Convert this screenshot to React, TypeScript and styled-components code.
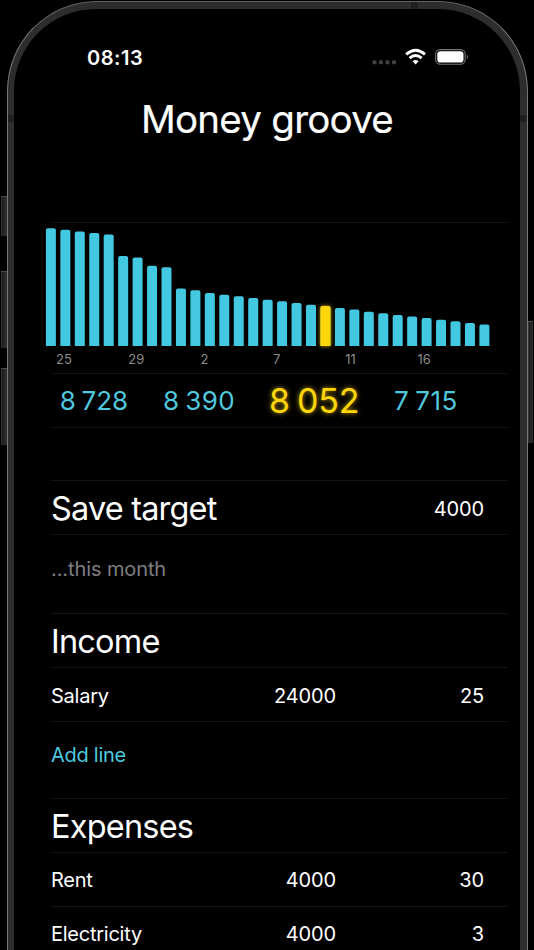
import React from 'react';
import styled, { createGlobalStyle, css } from 'styled-components';

const CYAN = '#42c8e0';
const CYAN_TEXT = '#50c8de';
const YELLOW = '#ffd60a';

const GlobalStyle = createGlobalStyle`
  html, body { margin: 0; background: #000; overflow: hidden; }
  * { box-sizing: border-box; }
`;

const Stage = styled.div`
  position: relative;
  height: 950px;
  padding: 1px 6px 0 7px;
  overflow: hidden;
  background: #000;
  color: #fff;
  font-family: Inter, sans-serif;
`;

const Phone = styled.div`
  position: relative;
  height: 1100px;
  padding: 7px 7px 7px 6px;
  border: 1px solid #777;
  border-top-color: #606060;
  border-radius: 90px;
  background: #2d2d2d;
`;

const Screen = styled.main`
  height: 100%;
  border-radius: 82px;
  background: #000;
  padding: 0 12px 0 37px;
`;

const SideButton = styled.div<{ $side: 'left' | 'right'; $top: number; $height: number }>`
  position: absolute;
  top: ${(p) => p.$top}px;
  height: ${(p) => p.$height}px;
  width: ${(p) => (p.$side === 'left' ? 6 : 5)}px;
  ${(p) => (p.$side === 'left' ? 'left: 1px;' : 'left: 528px;')}
  background: linear-gradient(90deg, #333 0 1px, #202020 1px 3px, #2c2c2c 3px);
  border-top: 1px solid #4c4c4c;
`;

const Antenna = styled.div<{ $edge: 'left' | 'right' | 'top' }>`
  position: absolute;
  width: 7px;
  height: 7px;
  background: #202020;
  ${(p) => p.$edge === 'left' && css`left: 0; top: 113px; width: 6px;`}
  ${(p) => p.$edge === 'right' && css`right: 0; top: 113px;`}
  ${(p) => p.$edge === 'top' && css`left: 403px; top: 0;`}
`;

const StatusBar = styled.header`
  display: flex;
  align-items: flex-start;
  justify-content: space-between;
  height: 27px;
  padding: 0 39px 0 36px;
`;

const StatusSpace = styled.div`
  height: 35px;
`;

const Clock = styled.time`
  font-size: 20px;
  font-weight: 600;
  letter-spacing: 0.55px;
  line-height: 28px;
`;

const StatusIcons = styled.svg`
  display: block;
  width: 98px;
  height: 20px;
  margin-top: 3px;
`;

const Title = styled.h1`
  margin: 24px -12px 79px -37px;
  text-align: center;
  font-size: 38.5px;
  font-weight: 400;
  line-height: 48px;
  letter-spacing: -0.75px;
  -webkit-text-stroke: 0.2px #fff;
`;

const ChartPanel = styled.section`
  height: 151px;
  border-top: 1px solid #121212;
`;

const Bars = styled.svg`
  display: block;
  width: 456px;
  height: 126px;
  margin-left: -7px;
  overflow: visible;
`;

const Days = styled.div`
  display: grid;
  grid-template-columns: repeat(6, 72.3px);
  padding-left: 5px;
  color: #8b8b8b;
  font-size: 13px;
  line-height: 20px;
`;

const Amounts = styled.section`
  display: grid;
  grid-template-columns: 86px 124px 107px 116px;
  align-items: center;
  height: 55px;
  margin-bottom: 52px;
  border: solid #121212;
  border-width: 1px 0;
`;

const Amount = styled.span<{ $current?: boolean; $spacing: number }>`
  text-align: center;
  white-space: nowrap;
  line-height: 53px;
  color: ${CYAN_TEXT};
  font-size: 26px;
  letter-spacing: ${(p) => p.$spacing}px;
  word-spacing: -1.8px;
  ${(p) =>
    p.$current &&
    css`
      color: ${YELLOW};
      font-size: 34px;
      margin-left: -1px;
      text-shadow: 0 0 5px rgba(255, 214, 10, 0.75);
    `}
`;

const Section = styled.section<{ $height: number }>`
  height: ${(p) => p.$height}px;
`;

const Row = styled.div`
  display: grid;
  grid-template-columns: 285px 148px;
  align-items: center;
  height: 54px;
  padding-top: 1px;
  border-top: 1px solid #141414;
  font-size: 20px;
  letter-spacing: -0.15px;
`;

const HeadingRow = styled(Row)`
  border-bottom: 1px solid #141414;
  height: 55px;
`;

const LineRow = styled(Row)<{ $last?: boolean }>`
  margin-top: -1px;
  padding-top: ${(p) => (p.$last ? 3 : 0)}px;
  height: 55px;
  border-bottom: ${(p) => (p.$last ? '1px solid #141414' : 'none')};
`;

const Heading = styled.h2<{ $tight?: boolean }>`
  margin: 0;
  font-size: 32.5px;
  font-weight: 400;
  letter-spacing: ${(p) => (p.$tight ? -0.83 : -0.8)}px;
  white-space: nowrap;
`;

const LineCells = styled.div`
  display: flex;
  justify-content: space-between;
`;

const Name = styled.span`
  letter-spacing: -0.25px;
`;

const Value = styled.span`
  text-align: right;
`;

const Target = styled(Value)`
  padding-top: 2px;
`;

const Note = styled.p`
  margin: 0;
  color: #7e7e82;
  font-size: 20px;
  line-height: 68px;
  letter-spacing: -0.1px;
`;

const AddLine = styled.button`
  display: block;
  margin: 0;
  padding: 0;
  border: 0;
  background: none;
  color: ${CYAN_TEXT};
  font: 400 20px/67px Inter, sans-serif;
  letter-spacing: -0.27px;
`;

const TOPS = [
  228.2, 229.8, 231.4, 233, 234.6, 256, 257.4, 265.8, 267.3, 288.5, 290.2, 293, 294.7, 296.3, 298, 299.7,
  301.3, 303, 304.8, 306, 308, 309.6, 311.8, 313.3, 315, 316.5, 318.1, 319.8, 321.3, 323, 324.6,
];
const CHART_TOP = 223;
const BASE = 346 - CHART_TOP;
const CURRENT = 19;

const barPath = (i: number) => {
  const x = 1.9 + i * 14.45;
  const y = TOPS[i] - CHART_TOP;
  return `M${x} ${BASE}V${y + 2}q0-2 2-2h6q2 0 2 2V${BASE}z`;
};

function BalanceChart() {
  return (
    <ChartPanel>
      <Bars viewBox="0 0 456 126">
        <defs>
          <filter id="glow" x="-60%" y="-15%" width="220%" height="130%">
            <feGaussianBlur stdDeviation="1.9" />
          </filter>
        </defs>
        {TOPS.map((_, i) => (
          <path key={i} d={barPath(i)} fill={CYAN} />
        ))}
        <path d={barPath(CURRENT)} fill={YELLOW} opacity="0.8" filter="url(#glow)" />
        <path d={barPath(CURRENT)} fill={YELLOW} />
      </Bars>
      <Days>
        {['25', '29', '2', '7', '11', '16'].map((d) => (
          <span key={d}>{d}</span>
        ))}
      </Days>
    </ChartPanel>
  );
}

function Status() {
  return (
    <StatusIcons viewBox="371 47 98 20">
      {[374.5, 381, 387.5, 394].map((x) => (
        <rect key={x} x={x - 2} y="60.2" width="4" height="4" rx="1.3" fill="#414141" />
      ))}
      <g fill="none" stroke="#fff" strokeWidth="2.9">
        <path d="M406.2 54.3Q415.6 46.1 425 54.3" />
        <path d="M409.6 58.2Q415.6 53 421.6 58.2" />
      </g>
      <path d="M412.6 61.2Q415.6 58.6 418.6 61.2L415.6 64.4z" fill="#fff" />
      <rect x="435.6" y="49.6" width="29.6" height="14.6" rx="4.6" fill="none" stroke="#747474" strokeWidth="1.1" />
      <rect x="437.3" y="51.2" width="26.2" height="11.4" rx="3.1" fill="#fff" />
      <path d="M466.9 54.7q2.2 2.2 0 4.4z" fill="#777" />
    </StatusIcons>
  );
}

function Line({ name, amount, day, last }: { name: string; amount: string; day: string; last?: boolean }) {
  return (
    <LineRow $last={last}>
      <LineCells>
        <Name>{name}</Name>
        <Value>{amount}</Value>
      </LineCells>
      <Value>{day}</Value>
    </LineRow>
  );
}

export default function App() {
  return (
    <>
      <GlobalStyle />
      <Stage>
        <SideButton $side="left" $top={196} $height={40} />
        <SideButton $side="left" $top={271} $height={77} />
        <SideButton $side="left" $top={368} $height={77} />
        <SideButton $side="right" $top={321} $height={122} />
        <Phone>
          <Antenna $edge="left" />
          <Antenna $edge="right" />
          <Antenna $edge="top" />
          <Screen>
            <StatusSpace />
            <StatusBar>
              <Clock>08:13</Clock>
              <Status />
            </StatusBar>
            <Title>Money groove</Title>
            <BalanceChart />
            <Amounts>
              <Amount $spacing={0.05}>8 728</Amount>
              <Amount $spacing={0.4}>8 390</Amount>
              <Amount $spacing={-0.3} $current>8 052</Amount>
              <Amount $spacing={0.5}>7 715</Amount>
            </Amounts>
            <Section $height={133}>
              <HeadingRow>
                <Heading $tight>Save target</Heading>
                <Target>4000</Target>
              </HeadingRow>
              <Note>...this month</Note>
            </Section>
            <Section $height={185}>
              <HeadingRow>
                <Heading>Income</Heading>
              </HeadingRow>
              <Line name="Salary" amount="24000" day="25" last />
              <AddLine>Add line</AddLine>
            </Section>
            <Section $height={190}>
              <HeadingRow>
                <Heading>Expenses</Heading>
              </HeadingRow>
              <Line name="Rent" amount="4000" day="30" />
              <Line name="Electricity" amount="4000" day="3" />
            </Section>
          </Screen>
        </Phone>
      </Stage>
    </>
  );
}
